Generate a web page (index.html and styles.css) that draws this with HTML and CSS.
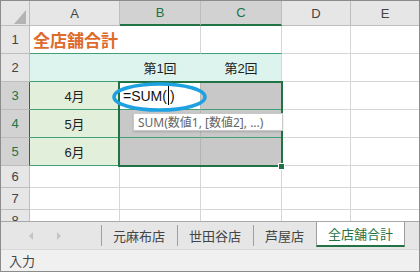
FILE: index.html
```html
<!DOCTYPE html>
<html lang="ja">
<head>
  <meta charset="UTF-8">
  <title>全店舗合計</title>
  <link rel="stylesheet" href="styles.css">
</head>
<body>
  <div class="app">
    <div class="sheet">
      <div class="grid">
        <!-- column headers -->
        <div class="c h corner">
          <svg width="12" height="14" viewBox="0 0 12 14"><polygon points="12,0 12,14 0,14" fill="#b4b4b4"/></svg>
        </div>
        <div class="c h">A</div>
        <div class="c h on">B</div>
        <div class="c h on">C</div>
        <div class="c h">D</div>
        <div class="c h last">E</div>

        <!-- row 1 -->
        <div class="c h">1</div>
        <div class="c title tb">全店舗合計</div>
        <div class="c tb"></div>
        <div class="c"></div>
        <div class="c last"></div>

        <!-- row 2 -->
        <div class="c h">2</div>
        <div class="c teal tb"></div>
        <div class="c teal tb">第1回</div>
        <div class="c teal tb edge">第2回</div>
        <div class="c"></div>
        <div class="c last"></div>

        <!-- row 3 -->
        <div class="c h sel-row">3</div>
        <div class="c month tb">4月</div>
        <div class="c active tb">=SUM(<span class="caret"></span>)</div>
        <div class="c shade tb"></div>
        <div class="c"></div>
        <div class="c last"></div>

        <!-- row 4 -->
        <div class="c h sel-row">4</div>
        <div class="c month tb">5月</div>
        <div class="c shade tb mid"></div>
        <div class="c shade tb"></div>
        <div class="c"></div>
        <div class="c last"></div>

        <!-- row 5 -->
        <div class="c h sel-row">5</div>
        <div class="c month tb">6月</div>
        <div class="c shade tb mid"></div>
        <div class="c shade tb"></div>
        <div class="c"></div>
        <div class="c last"></div>

        <!-- rows 6-8 -->
        <div class="c h">6</div>
        <div class="c"></div><div class="c"></div><div class="c"></div><div class="c"></div><div class="c last"></div>
        <div class="c h">7</div>
        <div class="c"></div><div class="c"></div><div class="c"></div><div class="c"></div><div class="c last"></div>
        <div class="c h">8</div>
        <div class="c"></div><div class="c"></div><div class="c"></div><div class="c"></div><div class="c last"></div>
      </div>

      <div class="selection"></div>
      <div class="handle"></div>
      <svg class="ring" width="100" height="34" viewBox="0 0 100 34">
        <ellipse cx="49.5" cy="17" rx="45.5" ry="13" fill="none" stroke="#1ea1e1" stroke-width="3.5"/>
      </svg>
      <div class="tip">SUM(数値1, [数値2], ...)</div>
    </div>

    <div class="tabs">
      <div class="nav">
        <span class="arrow left"></span>
        <span class="arrow right"></span>
      </div>
      <div class="sep"></div>
      <div class="tab">元麻布店</div>
      <div class="sep"></div>
      <div class="tab">世田谷店</div>
      <div class="sep"></div>
      <div class="tab">芦屋店</div>
      <div class="tab on">全店舗合計</div>
    </div>

    <div class="status">入力</div>
  </div>
</body>
</html>
```

FILE: styles.css
```css
* { box-sizing: border-box; }
body { margin: 0; font-family: "Liberation Sans", "Noto Sans CJK JP", sans-serif; background: #fff; }

.app { width: 420px; height: 272px; border: 1px solid #8c8c8c; display: flex; flex-direction: column; overflow: hidden; background: #fff; }

/* sheet */
.sheet { position: relative; height: 220px; flex: none; overflow: hidden; }
.grid { display: grid; grid-template-columns: 29px 90px 81px 81px 69px 68px; grid-template-rows: 25px repeat(5, 28px) repeat(3, 22px); }
.c { border-right: 1px solid #d6d6d6; border-bottom: 1px solid #d6d6d6; font-size: 13px; color: #222; display: flex; align-items: center; justify-content: center; white-space: nowrap; }
.c.last { border-right: none; }

.h { background: #e6e6e6; color: #444; border-color: #bdbdbd; }
.h.on { background: #d2d2d2; color: #217346; border-bottom: 2px solid #217346; }
.h.sel-row { background: #d2d2d2; color: #217346; border-right-color: #217346; }
.corner { align-items: flex-end; justify-content: flex-end; padding: 0 3px 1px 0; }
.corner svg { display: block; }

.tb { border-bottom-color: #3f9f77; }
.title { grid-column: span 2; justify-content: flex-start; padding-left: 3px; font-size: 17px; font-weight: bold; color: #dd6b2c; font-family: "Noto Sans CJK JP", sans-serif; }
.teal { background: #dcf3ee; border-right-color: #dcf3ee; }
.teal.edge { border-right-color: #d6d6d6; }
.month { background: #e2efda; border-right-color: #217346; }
.active { justify-content: flex-start; padding-left: 3px; font-size: 14px; color: #111; background: #fff; border-right-color: #b8b8b8; }
.caret { display: inline-block; width: 1px; height: 19px; background: #000; margin: 0 1px; }
.shade { background: #c8c8c8; }
.shade.mid { border-right-color: #b4b4b4; }

/* overlays */
.selection { position: absolute; left: 117px; top: 80px; width: 165px; height: 86px; border: 2px solid #217346; }
.handle { position: absolute; left: 277px; top: 162px; width: 7px; height: 7px; background: #217346; border: 1px solid #fff; }
.ring { position: absolute; left: 109px; top: 79px; }
.tip { position: absolute; left: 132px; top: 112px; width: 150px; height: 18px; background: #fff; border: 1px solid #c8c8c8; box-shadow: 0 1px 2px rgba(0,0,0,0.15); font-family: "Noto Sans", "Noto Sans CJK JP", sans-serif; font-size: 12px; color: #666; padding-left: 4px; display: flex; align-items: center; white-space: nowrap; }

/* sheet tabs */
.tabs { height: 28px; flex: none; border-top: 1px solid #a8a8a8; background: #e6e6e6; display: flex; font-size: 13px; color: #444; font-family: "Noto Sans CJK JP", sans-serif; }
.nav { width: 100px; display: flex; align-items: center; padding-left: 28px; gap: 24px; }
.arrow { width: 0; height: 0; border-top: 4px solid transparent; border-bottom: 4px solid transparent; }
.arrow.left { border-right: 4px solid #c4c4c4; }
.arrow.right { border-left: 4px solid #c4c4c4; }
.sep { width: 1px; background: #9e9e9e; margin: 3px 0; }
.tab { display: flex; align-items: center; padding: 0 12px 0 11px; }
.tab.on { align-self: flex-start; height: 25px; padding: 0 11px; background: #fff; color: #217346; border-left: 1px solid #9e9e9e; border-right: 1px solid #9e9e9e; border-bottom: 2px solid #217346; }

/* status bar */
.status { flex: 1; background: #f0f0f0; border-top: 1px solid #d8d8d8; display: flex; align-items: center; padding-left: 8px; font-size: 13px; color: #444; font-family: "Noto Sans CJK JP", sans-serif; }
```
